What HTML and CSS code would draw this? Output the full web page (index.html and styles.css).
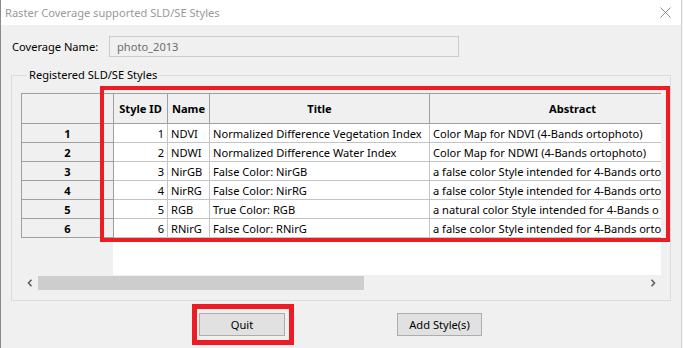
FILE: index.html
```html
<!DOCTYPE html>
<html>
<head>
  <meta charset="utf-8">
  <title>Raster Coverage supported SLD/SE Styles</title>
  <link rel="stylesheet" href="styles.css">
</head>
<body>
  <div class="window">
    <div class="titlebar">
      <span class="title">Raster Coverage supported SLD/SE Styles</span>
      <svg class="close" width="11" height="11" viewBox="0 0 11 11">
        <path d="M0.5 0.5 L10.5 10.5 M10.5 0.5 L0.5 10.5" stroke="#8c8c8c" stroke-width="1" fill="none"/>
      </svg>
    </div>

    <div class="content">
      <!-- Coverage name -->
      <div class="field">
        <label>Coverage Name:</label>
        <div class="input">photo_2013</div>
      </div>

      <!-- Styles grid -->
      <fieldset class="group">
        <legend>Registered SLD/SE Styles</legend>
        <div class="viewport">
          <div class="sheet">
            <table class="styles">
              <colgroup>
                <col class="c-row">
                <col class="c-id">
                <col class="c-name">
                <col class="c-title">
                <col class="c-abstract">
              </colgroup>
              <thead>
                <tr>
                  <th></th>
                  <th>Style ID</th>
                  <th>Name</th>
                  <th>Title</th>
                  <th class="h-abstract">Abstract</th>
                </tr>
              </thead>
              <tbody>
                <tr>
                  <th>1</th>
                  <td class="num">1</td>
                  <td>NDVI</td>
                  <td>Normalized Difference Vegetation Index</td>
                  <td>Color Map for NDVI (4-Bands ortophoto)</td>
                </tr>
                <tr>
                  <th>2</th>
                  <td class="num">2</td>
                  <td>NDWI</td>
                  <td>Normalized Difference Water Index</td>
                  <td>Color Map for NDWI (4-Bands ortophoto)</td>
                </tr>
                <tr>
                  <th>3</th>
                  <td class="num">3</td>
                  <td>NirGB</td>
                  <td>False Color: NirGB</td>
                  <td>a false color Style intended for 4-Bands orto</td>
                </tr>
                <tr>
                  <th>4</th>
                  <td class="num">4</td>
                  <td>NirRG</td>
                  <td>False Color: NirRG</td>
                  <td>a false color Style intended for 4-Bands orto</td>
                </tr>
                <tr>
                  <th>5</th>
                  <td class="num">5</td>
                  <td>RGB</td>
                  <td>True Color: RGB</td>
                  <td>a natural color Style intended for 4-Bands o</td>
                </tr>
                <tr>
                  <th>6</th>
                  <td class="num">6</td>
                  <td>RNirG</td>
                  <td>False Color: RNirG</td>
                  <td>a false color Style intended for 4-Bands orto</td>
                </tr>
              </tbody>
            </table>
          </div>
        </div>
        <div class="hscroll">
          <div class="arrow">
            <svg width="6" height="8" viewBox="0 0 6 8"><path d="M4.5 0.8 L1.5 4 L4.5 7.2" stroke="#606060" stroke-width="1.6" fill="none"/></svg>
          </div>
          <div class="track"><div class="thumb"></div></div>
          <div class="arrow">
            <svg width="6" height="8" viewBox="0 0 6 8"><path d="M1.5 0.8 L4.5 4 L1.5 7.2" stroke="#606060" stroke-width="1.6" fill="none"/></svg>
          </div>
        </div>
      </fieldset>

      <!-- Buttons -->
      <div class="buttons">
        <button class="btn btn-quit">Quit</button>
        <button class="btn">Add Style(s)</button>
      </div>
    </div>

    <!-- Red highlight marks -->
    <div class="mark mark-table"></div>
    <div class="mark mark-quit"></div>
  </div>
</body>
</html>
```

FILE: styles.css
```css
body {
  margin: 0;
  background-color: #f0f0f0;
  font-family: "Noto Sans", Arial, sans-serif;
  font-size: 11.1px;
  color: #000;
  overflow: hidden;
}

.window {
  position: relative;
  width: 680px;
  height: 348px;
  border-left: 1px solid #8a8a8a;
  border-right: 1px solid #d4d4d4;
}

.titlebar {
  height: 25px;
  background-color: #fff;
  display: flex;
  align-items: center;
  justify-content: space-between;
  padding: 0 10px 0 4px;
}

.title {
  color: #999;
}

.content {
  padding: 11px 0 0 10px;
}

.field {
  display: flex;
  align-items: center;
  height: 21px;
}

.field label {
  width: 97px;
  padding-left: 1px;
}

.input {
  box-sizing: border-box;
  width: 350px;
  height: 21px;
  line-height: 19px;
  padding-left: 7px;
  border: 1px solid #cccccc;
  background-color: #f0f0f0;
  color: #6d6d6d;
}

.group {
  box-sizing: border-box;
  width: 660px;
  margin: 10px 0 0 0;
  padding: 10px 9px 9px 9px;
  border: 1px solid #dcdcdc;
}

.group legend {
  margin-left: 6px;
  padding: 0 2px;
  line-height: 16px;
}

.viewport {
  width: 640px;
  height: 182px;
  overflow: hidden;
  background: linear-gradient(to right, #f0f0f0 92px, #fff 92px);
}

.sheet {
  width: 694px;
}

.styles {
  table-layout: fixed;
  width: 100%;
  border-collapse: collapse;
}

.c-row { width: 92px; }
.c-id { width: 54px; }
.c-name { width: 42px; }
.c-title { width: 220px; }
.c-abstract { width: 286px; }

.styles th,
.styles td {
  padding: 0 3px;
  white-space: nowrap;
  overflow: hidden;
  border: 1px solid #a0a0a0;
}

.styles th {
  background-color: #f0f0f0;
  font-weight: bold;
  text-align: center;
}

.styles th.h-abstract {
  text-align: left;
  padding-left: 119px;
}

.styles thead tr {
  height: 30px;
}

.styles tbody tr {
  height: 19px;
}

.styles td {
  background-color: #fff;
  border-color: #c4c4c4;
}

.styles td.num {
  text-align: right;
}

.hscroll {
  display: flex;
  height: 16px;
  width: 640px;
  background-color: #f0f0f0;
}

.arrow {
  width: 17px;
  display: flex;
  align-items: center;
  justify-content: center;
}

.track {
  flex: 1;
  padding: 1px 0;
}

.thumb {
  width: 326px;
  height: 14px;
  background-color: #cdcdcd;
}

.buttons {
  display: flex;
  gap: 112px;
  margin-top: 12px;
  padding-left: 188px;
}

.btn {
  box-sizing: border-box;
  height: 23px;
  width: 85px;
  padding: 0;
  font-family: "Noto Sans", Arial, sans-serif;
  font-size: 11.1px;
  color: #000;
  background-color: #e1e1e1;
  border: 1px solid #adadad;
}

.btn-quit {
  width: 86px;
}

.mark {
  position: absolute;
  box-sizing: border-box;
  border: 4px solid #ed1c24;
}

.mark-table {
  left: 99px;
  top: 86px;
  width: 570px;
  height: 156px;
}

.mark-quit {
  left: 191px;
  top: 304px;
  width: 102px;
  height: 41px;
  border-width: 5px;
}
```
